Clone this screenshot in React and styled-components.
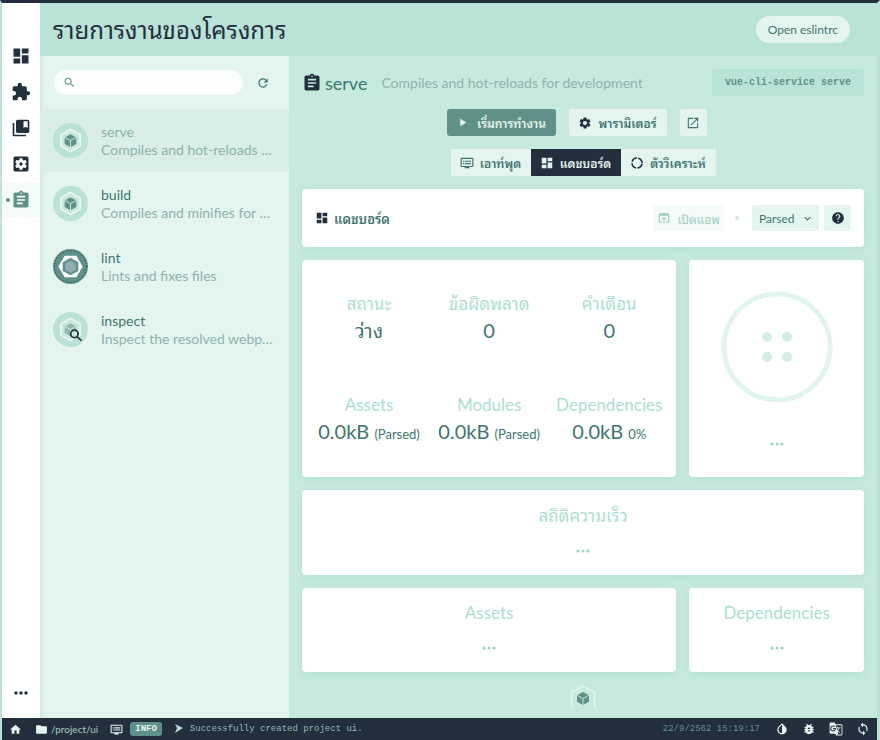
import React from "react";
import styled, { createGlobalStyle, css } from "styled-components";
import {
  MdDashboard, MdExtension, MdCollectionsBookmark, MdSettingsApplications, MdAssignment,
  MdMoreHoriz, MdSearch, MdRefresh, MdPlayArrow, MdSettings, MdOpenInNew, MdDvr,
  MdOpenInBrowser, MdKeyboardArrowDown, MdHelp, MdHome, MdFolder, MdInvertColors,
  MdBugReport, MdGTranslate, MdLoop,
} from "react-icons/md";

const c = {
  page: "#c6eade",
  header: "#b9e3d6",
  panel: "#e4f5ef",
  selected: "#d8eee6",
  dark: "#232f3c",
  teal: "#5f918a",
  text: "#3f766f",
  muted: "#8fb3af",
  label: "#aedfce",
};
const mono = '"Liberation Mono", monospace';

const GlobalStyle = createGlobalStyle`
  * { box-sizing: border-box; }
  body { margin: 0; background: ${c.page}; }
  body, button, input, select {
    font-family: Lato, "Noto Sans Thai Looped", "Noto Looped Thai", Loma, Garuda, Waree, "Noto Sans Thai", sans-serif;
  }
  button, a, input, select { color: inherit; text-decoration: none; }
  h1, h2, p { margin: 0; font-weight: 400; }
  svg { display: block; flex: none; }
`;

const Shell = styled.div`
  min-height: 100vh;
  display: grid;
  grid-template-columns: 38px minmax(0, 1fr);
  grid-template-rows: 1fr auto;
  border-top: 3px solid ${c.dark};
  border-left: 2px solid ${c.header};
  border-right: 3px solid ${c.header};
  color: ${c.text};
`;
const SideNav = styled.nav`
  display: flex;
  flex-direction: column;
  padding-top: 35px;
  background: #fff;
`;
const NavLink = styled.a`
  position: relative;
  display: grid;
  place-items: center;
  height: 36px;
  && { color: ${(p) => (p.$active ? c.teal : c.dark)}; }
  background: ${(p) => (p.$active ? "#f4fbf9" : "transparent")};
  ${(p) => p.$active && css`
    &::before {
      content: "";
      position: absolute;
      left: 4px;
      width: 4px;
      height: 4px;
      border-radius: 50%;
      background: ${c.teal};
    }
  `}
`;
const MoreButton = styled.button`
  display: grid;
  place-items: center;
  height: 50px;
  margin-top: auto;
  padding: 0;
  border: 0;
  background: none;
  && { color: ${c.dark}; }
`;
const Main = styled.div`
  display: grid;
  grid-template-rows: 53px 1fr;
`;
const Header = styled.header`
  display: flex;
  align-items: center;
  justify-content: space-between;
  padding: 0 27px 0 13px;
  background: ${c.header};
`;
const Title = styled.h1`
  font-size: 24px;
  line-height: 36px;
  color: ${c.dark};
`;
const PillButton = styled.button`
  height: 27px;
  padding: 0 12px;
  border: 0;
  border-radius: 14px;
  background: ${c.panel};
  font-size: 12px;
`;
const Columns = styled.div`
  display: grid;
  grid-template-columns: 249px minmax(0, 1fr);
`;
const TaskPanel = styled.aside`
  background: ${c.panel};
  box-shadow: inset 6px 0 5px -4px #c9e8dd;
`;
const SearchRow = styled.div`
  display: flex;
  align-items: center;
  gap: 12px;
  height: 53px;
  padding: 0 19px 0 14px;
`;
const SearchBox = styled.label`
  display: flex;
  flex: 1;
  align-items: center;
  gap: 6px;
  height: 25px;
  padding: 0 9px;
  border-radius: 13px;
  background: #fbfefd;
  color: ${c.teal};
  input {
    width: 100%;
    min-width: 0;
    border: 0;
    outline: 0;
    background: none;
    font-size: 12px;
  }
`;
const IconButton = styled.button`
  display: grid;
  place-items: center;
  width: 15px;
  height: 24px;
  padding: 0;
  border: 0;
  background: none;
`;
const Task = styled.a`
  display: flex;
  align-items: center;
  gap: 13px;
  height: 63px;
  padding: 0 16px 0 13px;
  background: ${(p) => (p.$active ? c.selected : "transparent")};
`;
const TaskText = styled.div`
  min-width: 0;
  font-size: 14px;
  line-height: 18px;
`;
const TaskName = styled.div`
  color: ${(p) => (p.$active ? c.muted : c.text)};
`;
const TaskDescription = styled.div`
  overflow: hidden;
  color: ${c.muted};
  text-overflow: ellipsis;
  white-space: nowrap;
`;
const Content = styled.main`
  display: flex;
  flex-direction: column;
  gap: 13px;
  padding: 13px 13px 8px;
`;
const TaskHeader = styled.div`
  display: flex;
  align-items: center;
  height: 27px;
  color: ${c.dark};
`;
const TaskTitle = styled.h2`
  margin: 0 14px 0 3px;
  font-size: 18px;
  line-height: 20px;
  color: ${c.text};
`;
const Summary = styled.p`
  flex: 1;
  font-size: 14px;
  line-height: 18px;
  color: ${c.muted};
`;
const Command = styled.code`
  padding: 0 13px;
  border-radius: 3px;
  background: ${c.header};
  color: ${c.teal};
  font: bold 10px/27px ${mono};
`;
const Actions = styled.div`
  display: flex;
  justify-content: center;
  gap: ${(p) => (p.$joined ? "0" : "13px")};
  padding-right: ${(p) => (p.$joined ? "0" : "13px")};
`;
const Button = styled.button`
  display: flex;
  align-items: center;
  justify-content: center;
  gap: ${(p) => p.$gap || 6}px;
  height: ${(p) => p.$height || 27}px;
  min-width: 27px;
  width: ${(p) => (p.$width ? `${p.$width}px` : "auto")};
  padding: 0;
  border: 0;
  border-radius: ${(p) => (p.$joined ? "0" : "3px")};
  background: ${c.panel};
  font-size: 12px;
  font-weight: 600;
  white-space: nowrap;
  ${(p) => p.$tone === "primary" && css`background: ${c.teal}; && { color: ${c.panel}; }`}
  ${(p) => p.$tone === "dark" && css`background: ${c.dark}; && { color: #e4f5ef; }`}
  ${(p) => p.$tone === "faded" && css`background: #f4fbf9; font-weight: 400; && { color: #9dccbf; }`}
`;
const DarkIcon = styled.span`
  color: ${c.dark};
`;
const Card = styled.section`
  border-radius: 4px;
  background: #fff;
  box-shadow: 0 2px 8px #b3dfd1;
`;
const Toolbar = styled(Card)`
  display: flex;
  align-items: center;
  height: 58px;
  padding: 0 13px;
`;
const ToolbarTitle = styled.h2`
  display: flex;
  flex: 1;
  align-items: center;
  gap: 5px;
  font-size: 13px;
  font-weight: 600;
`;
const Separator = styled.span`
  width: 4px;
  height: 4px;
  margin: 0 13px 0 11px;
  border-radius: 50%;
  background: #d0ede4;
`;
const SelectBox = styled.label`
  position: relative;
  display: flex;
  align-items: center;
  margin-right: 5px;
  select {
    appearance: none;
    width: 67px;
    height: 26px;
    padding: 0 7px;
    border: 0;
    border-radius: 2px;
    background: ${c.panel};
    font-size: 12px;
  }
  svg {
    position: absolute;
    right: 5px;
    pointer-events: none;
  }
`;
const CardRow = styled.div`
  display: grid;
  grid-template-columns: 15fr 7fr;
  gap: 13px;
`;
const Stats = styled(Card)`
  display: grid;
  grid-template-columns: repeat(3, 1fr);
  align-items: center;
  height: 217px;
  padding: 8px 7px 5px;
  text-align: center;
`;
const Stat = styled.div`
  white-space: nowrap;
`;
const Label = styled.div`
  font-size: 17px;
  line-height: 24px;
  color: ${c.label};
`;
const Value = styled.div`
  font-size: 20px;
  line-height: 28px;
  small { font-size: 13px; }
`;
const Centered = styled(Card)`
  display: flex;
  flex-direction: column;
  align-items: center;
  justify-content: center;
  gap: ${(p) => p.$gap || 11}px;
  height: ${(p) => p.$height}px;
  padding-top: ${(p) => p.$top || 0}px;
`;
const Footer = styled.footer`
  display: grid;
  place-items: center;
`;
const StatusBar = styled.footer`
  grid-column: 1 / -1;
  display: flex;
  align-items: center;
  height: 22px;
  padding: 0 7px;
  background: ${c.dark};
  color: ${c.panel};
  font-size: 10px;
`;
const StatusLink = styled.a`
  display: flex;
  align-items: center;
  gap: 3px;
  margin-right: ${(p) => p.$space}px;
  span { color: #a3ccc2; }
`;
const Badge = styled.span`
  margin: 0 12px 0 7px;
  padding: 0 5px;
  border-radius: 3px;
  background: ${c.teal};
  font: bold 9px/14px ${mono};
`;
const Log = styled.span`
  flex: 1;
  margin-left: 6px;
  color: #8bbab0;
  font: 9px/14px ${mono};
`;
const Time = styled.time`
  margin-right: 15px;
  color: ${c.teal};
  font: 9px/14px ${mono};
`;
const StatusIcons = styled.div`
  display: flex;
  gap: 13px;
`;

function Cube({ search }) {
  return (
    <>
      <path d="M18 6.5 28 12.2v11.6L18 29.5 8 23.8V12.2Z" fill="#c9e9df" stroke="#e9f8f3" strokeWidth="1.6" />
      <path d="m18 11.5 6 3.3v6.8L18 25l-6-3.4v-6.8Z" fill={search ? "#94b9b3" : c.teal} />
      <path d="m12 14.8 6 3.2 6-3.2M18 18v7" fill="none" stroke="#c9e9df" strokeWidth="1" />
    </>
  );
}

function TaskIcon({ kind }) {
  return (
    <svg width="35" height="35" viewBox="0 0 36 36" aria-hidden="true">
      <circle cx="18" cy="18" r="18" fill={kind === "lint" ? c.teal : c.header} />
      {kind === "lint" ? (
        <>
          <circle cx="18" cy="18" r="16.5" fill="none" stroke={c.dark} strokeWidth="1" strokeDasharray="1 2" />
          <path d="M12 7h12l6.5 11L24 29H12L5.500 18Z" fill="#fff" />
          <path d="m18 9 8 4.500v9L18 27l-8-4.500v-9Z" fill={c.teal} />
          <path d="m18 12 5.500 3.100v6.200L18 24.400l-5.500-3.100v-6.200Z" fill="#93adb3" />
        </>
      ) : <Cube search={kind === "inspect"} />}
      {kind === "inspect" && (
        <g fill={c.page} stroke={c.dark} strokeWidth="1.8">
          <circle cx="22" cy="22.5" r="3.8" />
          <path d="m25 25.5 4.2 4" />
        </g>
      )}
    </svg>
  );
}

function Ring() {
  return (
    <svg width="14" height="14" viewBox="0 0 14 14" aria-hidden="true">
      <circle cx="7" cy="7" r="5" fill="none" stroke={c.dark} strokeWidth="1.6" strokeDasharray="6.45 1.4" strokeDashoffset="-0.7" />
    </svg>
  );
}

function ButtonLoader() {
  return (
    <svg width="112" height="112" viewBox="0 0 112 112" aria-hidden="true">
      <circle cx="56" cy="56" r="53" fill="none" stroke="#e1f4ed" strokeWidth="5" />
      <g fill="#d5eee5">
        <circle cx="46" cy="46" r="5" /><circle cx="66" cy="46" r="5" />
        <circle cx="46" cy="66" r="5" /><circle cx="66" cy="66" r="5" />
      </g>
    </svg>
  );
}

function Dots() {
  return (
    <svg width="14" height="24" viewBox="0 0 14 24" fill="#9ed4c2" aria-hidden="true">
      <circle cx="2" cy="12" r="1.6" /><circle cx="7" cy="12" r="1.6" /><circle cx="12" cy="12" r="1.6" />
    </svg>
  );
}

const nav = [
  ["Dashboard", MdDashboard],
  ["Plugins", MdExtension],
  ["Dependencies", MdCollectionsBookmark],
  ["Configuration", MdSettingsApplications],
  ["Tasks", MdAssignment],
];
const tasks = [
  ["serve", "Compiles and hot-reloads for development"],
  ["build", "Compiles and minifies for production"],
  ["lint", "Lints and fixes files"],
  ["inspect", "Inspect the resolved webpack config"],
];
const stats = [
  ["สถานะ", "ว่าง"],
  ["ข้อผิดพลาด", "0"],
  ["คำเตือน", "0"],
  ["Assets", "0.0kB", "(Parsed)"],
  ["Modules", "0.0kB", "(Parsed)"],
  ["Dependencies", "0.0kB", "0%"],
];

export default function App() {
  return (
    <>
      <GlobalStyle />
      <Shell>
        <SideNav>
          {nav.map(([name, Icon]) => (
            <NavLink key={name} href="#" aria-label={name} $active={name === "Tasks"}><Icon size={20} /></NavLink>
          ))}
          <MoreButton aria-label="More"><MdMoreHoriz size={20} /></MoreButton>
        </SideNav>
        <Main>
          <Header>
            <Title>รายการงานของโครงการ</Title>
            <PillButton>Open eslintrc</PillButton>
          </Header>
          <Columns>
            <TaskPanel>
              <SearchRow>
                <SearchBox><MdSearch size={13} /><input type="search" aria-label="Search" /></SearchBox>
                <IconButton aria-label="Refresh"><MdRefresh size={14} /></IconButton>
              </SearchRow>
              {tasks.map(([name, description]) => (
                <Task key={name} href="#" $active={name === "serve"}>
                  <TaskIcon kind={name} />
                  <TaskText>
                    <TaskName $active={name === "serve"}>{name}</TaskName>
                    <TaskDescription>{description}</TaskDescription>
                  </TaskText>
                </Task>
              ))}
            </TaskPanel>
            <Content>
              <TaskHeader>
                <MdAssignment size={20} />
                <TaskTitle>serve</TaskTitle>
                <Summary>Compiles and hot-reloads for development</Summary>
                <Command>vue-cli-service serve</Command>
              </TaskHeader>
              <Actions>
                <Button $tone="primary" $width={109} $gap={8}><MdPlayArrow size={13} />เริ่มการทำงาน</Button>
                <Button $width={98}><DarkIcon><MdSettings size={14} /></DarkIcon>พารามิเตอร์</Button>
                <Button aria-label="Open in new window"><MdOpenInNew size={14} /></Button>
              </Actions>
              <Actions $joined>
                <Button $joined $width={80}><MdDvr size={14} />เอาท์พุด</Button>
                <Button $joined $width={90} $tone="dark"><MdDashboard size={14} />แดชบอร์ด</Button>
                <Button $joined $width={95}><Ring />ตัววิเคราะห์</Button>
              </Actions>
              <Toolbar>
                <ToolbarTitle><DarkIcon><MdDashboard size={14} /></DarkIcon>แดชบอร์ด</ToolbarTitle>
                <Button $tone="faded" $width={71} $height={26}><MdOpenInBrowser size={14} />เปิดแอพ</Button>
                <Separator />
                <SelectBox>
                  <select aria-label="Size"><option>Parsed</option></select>
                  <MdKeyboardArrowDown size={13} />
                </SelectBox>
                <Button $height={26} aria-label="Help"><DarkIcon><MdHelp size={14} /></DarkIcon></Button>
              </Toolbar>
              <CardRow>
                <Stats>
                  {stats.map(([label, value, note]) => (
                    <Stat key={label}>
                      <Label>{label}</Label>
                      <Value>{value} {note && <small>{note}</small>}</Value>
                    </Stat>
                  ))}
                </Stats>
                <Centered $height={217} $gap={29} $top={10}><ButtonLoader /><Dots /></Centered>
              </CardRow>
              <Centered $height={85} $top={2}><Label>สถิติความเร็ว</Label><Dots /></Centered>
              <CardRow>
                <Centered $height={84}><Label>Assets</Label><Dots /></Centered>
                <Centered $height={84}><Label>Dependencies</Label><Dots /></Centered>
              </CardRow>
              <Footer>
                <svg width="26" height="25" viewBox="5 5 26 25" aria-hidden="true">
                  <path d="M6.5 28V12.5L18 6l11.5 6.5V28" fill="none" stroke="#e4f5ef" strokeWidth="1.5" />
                  <path d="m18 12 6 3.3v6.4L18 25l-6-3.3v-6.4Z" fill={c.teal} />
                  <path d="m12 15.3 6 3.2 6-3.2M18 18.5V25" fill="none" stroke="#b9e3d6" />
                </svg>
              </Footer>
            </Content>
          </Columns>
        </Main>
        <StatusBar>
          <StatusLink href="#" aria-label="Home" $space={13}><MdHome size={13} /></StatusLink>
          <StatusLink href="#" $space={12}><MdFolder size={13} /><span>/project/ui</span></StatusLink>
          <MdDvr size={13} />
          <Badge>INFO</Badge>
          <svg width="10" height="10" viewBox="0 0 10 10" aria-hidden="true"><path d="m1 0 8 4-8 5 2-5Z" fill="#b9d8d0" /></svg>
          <Log>Successfully created project ui.</Log>
          <Time>22/9/2562 15:19:17</Time>
          <StatusIcons>
            <MdInvertColors size={14} /><MdBugReport size={14} /><MdGTranslate size={14} /><MdLoop size={14} />
          </StatusIcons>
        </StatusBar>
      </Shell>
    </>
  );
}
